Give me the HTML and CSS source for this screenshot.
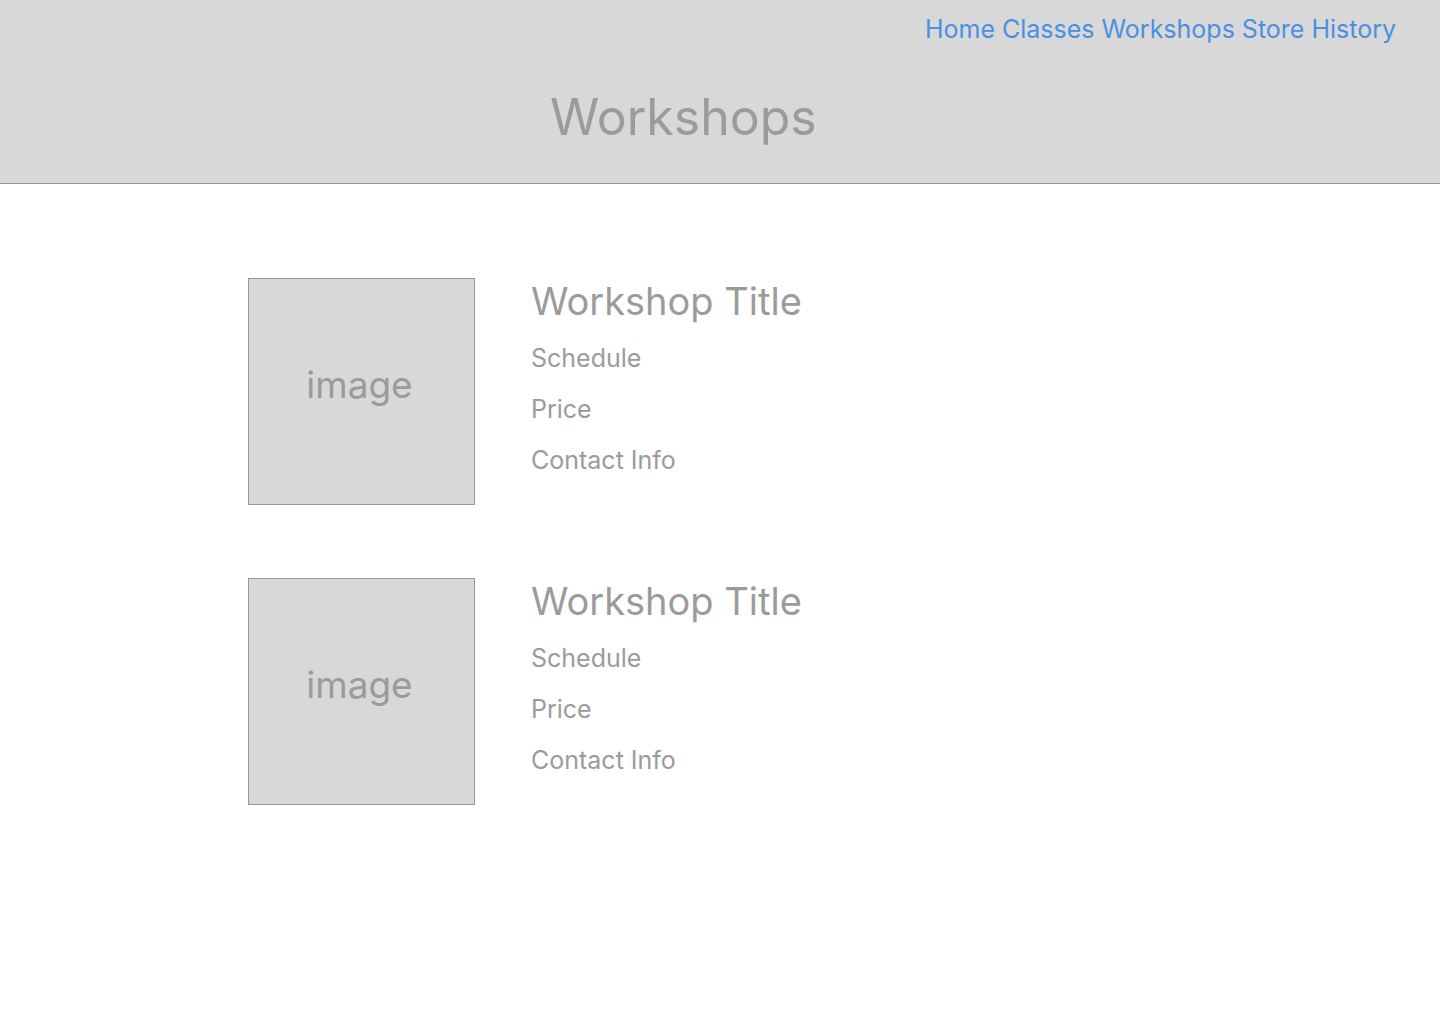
FILE: index.html
```html
<!DOCTYPE html>
<html lang="en">
<head>
<meta charset="utf-8">
<title>Workshops</title>
<link rel="stylesheet" href="styles.css">
</head>
<body>
<header class="site-header">
  <nav class="nav">
    <a href="#">Home</a>
    <a href="#">Classes</a>
    <a href="#">Workshops</a>
    <a href="#">Store</a>
    <a href="#">History</a>
  </nav>
  <h1 class="page-title">Workshops</h1>
</header>
<main class="workshops">
  <article class="workshop">
    <div class="thumb">image</div>
    <div class="info">
      <h2 class="info-title">Workshop Title</h2>
      <p class="info-item">Schedule</p>
      <p class="info-item">Price</p>
      <p class="info-item">Contact Info</p>
    </div>
  </article>
  <article class="workshop">
    <div class="thumb">image</div>
    <div class="info">
      <h2 class="info-title">Workshop Title</h2>
      <p class="info-item">Schedule</p>
      <p class="info-item">Price</p>
      <p class="info-item">Contact Info</p>
    </div>
  </article>
</main>
</body>
</html>
```

FILE: styles.css
```css
* { box-sizing: border-box; }
html, body { margin: 0; padding: 0; background: #ffffff; }
body {
  font-family: Inter, "Noto Sans", sans-serif;
  color: #9b9b9b;
}
.site-header {
  background: #d8d8d8;
  height: 184px;
  border-bottom: 1px solid #979797;
  padding: 14px 44px 0 0;
  display: flex;
  flex-direction: column;
}
.nav {
  display: flex;
  justify-content: flex-end;
  gap: 7px;
  font-size: 25px;
  line-height: 30px;
}
.nav a {
  color: #4a90e2;
  text-decoration: none;
}
.page-title {
  margin: 45px 0 0 550px;
  font-size: 50px;
  line-height: 56px;
  font-weight: 400;
  color: #9b9b9b;
}
.workshops {
  padding: 94px 0 0 248px;
  display: flex;
  flex-direction: column;
  gap: 73px;
}
.workshop {
  display: flex;
  align-items: flex-start;
  gap: 56px;
}
.thumb {
  width: 227px;
  height: 227px;
  background: #d8d8d8;
  border: 1px solid #979797;
  display: flex;
  align-items: center;
  justify-content: center;
  font-size: 37px;
  color: #9b9b9b;
  padding-bottom: 15px;
  padding-right: 4px;
}
.info {
  display: flex;
  flex-direction: column;
}
.info-title {
  margin: 0 0 9px;
  font-size: 38px;
  line-height: 46px;
  font-weight: 400;
}
.info-item {
  margin: 0;
  font-size: 25px;
  line-height: 51px;
}
```
